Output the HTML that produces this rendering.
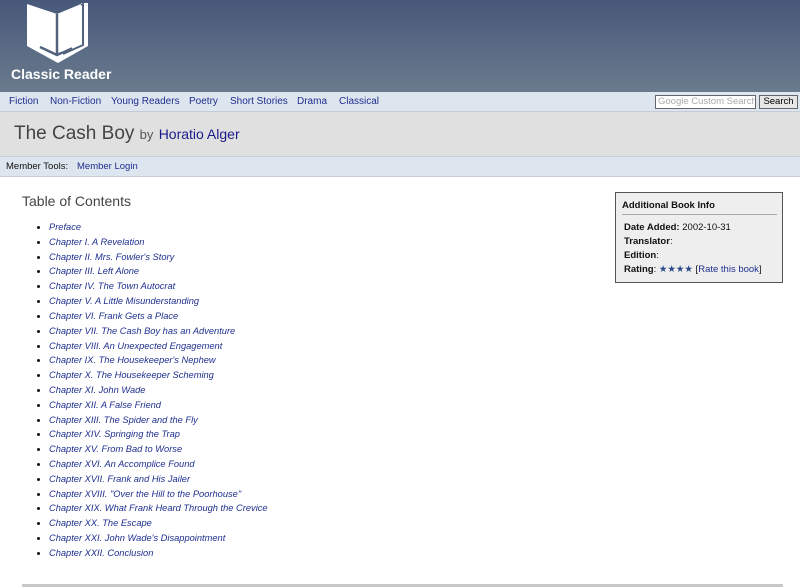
<!DOCTYPE html>
<html><head><style>
*{margin:0;padding:0;box-sizing:border-box}
body{width:800px;height:588px;overflow:hidden;font-family:"Liberation Sans",Arial,sans-serif;background:#fff;position:relative}
#hdr{position:absolute;left:0;top:0;width:800px;height:92px;background:linear-gradient(#47587a,#6a7b8d)}
#logoTxt{position:absolute;left:11px;top:66px;color:#fff;font-weight:bold;font-size:14px}
#nav{position:absolute;left:0;top:92px;width:800px;height:20px;background:#dde5ef;border-bottom:1px solid #c5ccd6}
#nav a{position:absolute;top:4px;font-size:10px;color:#1f2f8f;text-decoration:none}
#srch{position:absolute;left:655px;top:95px;width:101px;height:14px;border:1px solid #666;background:#fff;font-size:9.5px;color:#aaa;padding-left:2px;line-height:12px;white-space:nowrap;overflow:hidden}
#btn{position:absolute;left:759px;top:95px;width:39px;height:14px;border:1px solid #666;background:#e6e6e6;font-size:9.5px;color:#000;text-align:center;line-height:12px}
#tb{position:absolute;left:0;top:112px;width:800px;height:45px;background:#e0e0e0;border-bottom:1px solid #c8d0da}
#tb .t{position:absolute;left:14px;top:11px;font-size:19px;color:#444}
#tb .by{font-size:13px;color:#555}
#tb .a{font-size:14px;color:#1a1a8a}
#mt{position:absolute;left:0;top:157px;width:800px;height:20px;background:#dde5ef;border-bottom:1px solid #c5ccd6;font-size:9.5px}
#toc{position:absolute;left:22px;top:193px;font-size:14px;color:#444}
ul{position:absolute;left:37px;top:220px;list-style:none}
li{height:14.82px;font-size:9.3px;font-style:italic;color:#1f2f8f;position:relative;padding-left:12px;line-height:14px}
li:before{content:"";position:absolute;left:0;top:6px;width:3px;height:3px;border-radius:50%;background:#111}
#info{position:absolute;left:615px;top:192px;width:168px;height:91px;background:#eee;border:1px solid #555;font-size:9.5px;color:#111}
#info .h{position:absolute;left:6px;top:7px;font-weight:bold}
#info .hr{position:absolute;left:6px;top:21px;width:155px;height:1px;background:#aaa}
#info .r{position:absolute;left:8px}
#rule{position:absolute;left:22px;top:584px;width:761px;height:3px;background:#c8c8c8}
</style></head><body>
<div id="hdr">
<svg style="position:absolute;left:27px;top:3px" width="62" height="61" viewBox="0 0 62 61">
<path d="M0 1 L30 11 L54 1 L54 -1 L61 -1 L61 43 L31 60 L0 43 Z" fill="#fff"/>
<path d="M30 11 L30 52 M13 44 L30 52 L45 45" stroke="#52627c" stroke-width="2.5" fill="none"/>
<path d="M33 12 L54 3 L54 40 L34 49 Z" fill="#fff"/>
<path d="M54 2 L56 1 L56 42 L36 51" stroke="#52627c" stroke-width="2" fill="none"/>
</svg>
<div id="logoTxt">Classic Reader</div>
</div>
<div id="nav">
<a style="left:9px">Fiction</a><a style="left:50px">Non-Fiction</a><a style="left:111px">Young Readers</a><a style="left:189px">Poetry</a><a style="left:230px">Short Stories</a><a style="left:297px">Drama</a><a style="left:339px">Classical</a>
</div>
<div id="srch">Google Custom Search</div><div id="btn">Search</div>
<div id="tb"><div class="t">The Cash Boy <span class="by">by</span> <span class="a">Horatio Alger</span></div></div>
<div id="mt"><span style="position:absolute;left:6px;top:4px;color:#111">Member Tools:</span><span style="position:absolute;left:77px;top:4px;color:#1f2f8f">Member Login</span></div>
<div id="toc">Table of Contents</div>
<ul>
<li>Preface</li><li>Chapter I. A Revelation</li><li>Chapter II. Mrs. Fowler's Story</li><li>Chapter III. Left Alone</li><li>Chapter IV. The Town Autocrat</li><li>Chapter V. A Little Misunderstanding</li><li>Chapter VI. Frank Gets a Place</li><li>Chapter VII. The Cash Boy has an Adventure</li><li>Chapter VIII. An Unexpected Engagement</li><li>Chapter IX. The Housekeeper's Nephew</li><li>Chapter X. The Housekeeper Scheming</li><li>Chapter XI. John Wade</li><li>Chapter XII. A False Friend</li><li>Chapter XIII. The Spider and the Fly</li><li>Chapter XIV. Springing the Trap</li><li>Chapter XV. From Bad to Worse</li><li>Chapter XVI. An Accomplice Found</li><li>Chapter XVII. Frank and His Jailer</li><li>Chapter XVIII. "Over the Hill to the Poorhouse"</li><li>Chapter XIX. What Frank Heard Through the Crevice</li><li>Chapter XX. The Escape</li><li>Chapter XXI. John Wade's Disappointment</li><li>Chapter XXII. Conclusion</li>
</ul>
<div id="info">
<div class="h">Additional Book Info</div><div class="hr"></div>
<div class="r" style="top:29px"><b>Date Added:</b> 2002-10-31</div>
<div class="r" style="top:43px"><b>Translator</b>:</div>
<div class="r" style="top:57px"><b>Edition</b>:</div>
<div class="r" style="top:71px"><b>Rating</b>: <span style="color:#2a4a8a">★★★★</span> [<span style="color:#1f2f8f">Rate this book</span>]</div>
</div>
<div id="rule"></div>
</body></html>
